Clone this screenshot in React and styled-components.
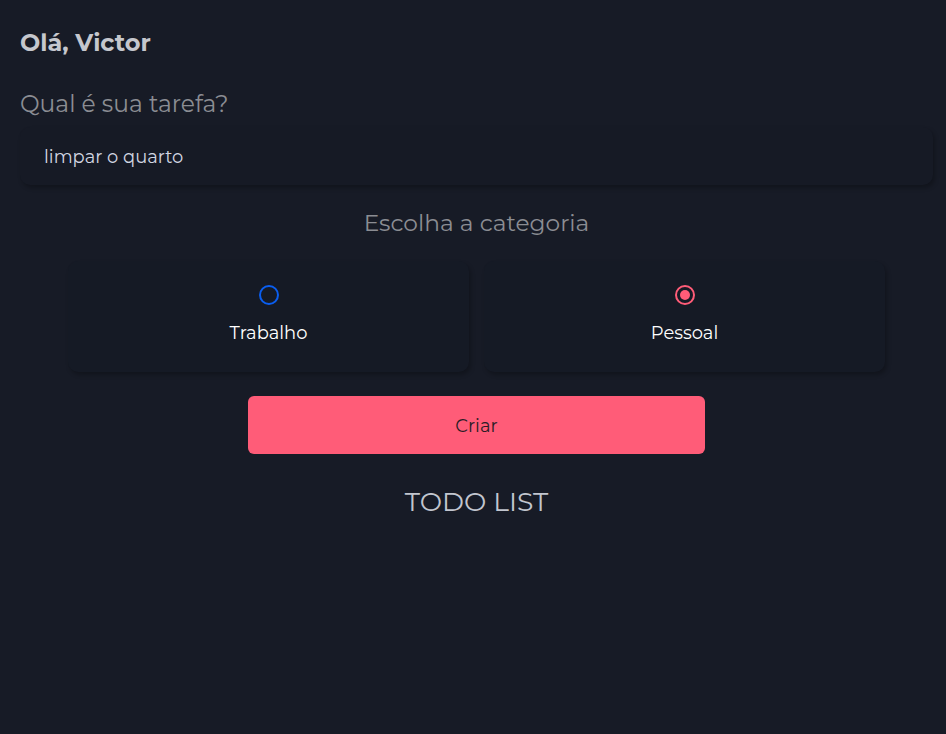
import React from 'react'
import styled, { createGlobalStyle } from 'styled-components';

const GlobalStyle = createGlobalStyle`
  body {
    margin: 0;
    background: #171b26;
    font-family: "Montserrat", "Lato", "Noto Sans", sans-serif;
  }
`;

const Page = styled.div`
  min-height: 734px;
  background: #171b26;
  padding: 0 13px 0 20px;
  box-sizing: border-box;
  display: flex;
  flex-direction: column;
`;

const Greeting = styled.h1`
  margin: 28px 0 0;
  font-size: 24px;
  line-height: 30px;
  font-weight: 700;
  color: #c5c7cd;
`;

const Question = styled.label`
  margin-top: 31px;
  font-size: 23.4px;
  line-height: 30px;
  color: #8b8d93;
`;

const Input = styled.input`
  margin-top: 8px;
  height: 58px;
  border: none;
  border-radius: 10px;
  background: #161a25;
  box-shadow: 2px 3px 4px rgba(0, 0, 0, 0.25);
  padding: 0 24px;
  font-family: inherit;
  font-size: 17.9px;
  color: #d2d6e2;
  outline: none;
`;

const Subtitle = styled.h2`
  margin: 23px 0 0;
  text-align: center;
  font-size: 23.3px;
  line-height: 30px;
  font-weight: 400;
  color: #8b8d93;
`;

const Cards = styled.div`
  margin: 23px auto 0;
  width: 817px;
  display: grid;
  grid-template-columns: 1fr 1fr;
  gap: 15px;
`;

const Card = styled.label`
  height: 111px;
  border-radius: 10px;
  background: #151a25;
  box-shadow: 2px 3px 4px rgba(0, 0, 0, 0.25);
  display: flex;
  flex-direction: column;
  align-items: center;
  padding-top: 24px;
  box-sizing: border-box;
  gap: 17px;
  color: #ffffff;
  font-size: 17.9px;
  line-height: 22px;
`;

const Radio = styled.span`
  width: 20px;
  height: 20px;
  box-sizing: border-box;
  border-radius: 50%;
  border: 2px solid ${props => props.color};
  display: flex;
  align-items: center;
  justify-content: center;
  &::after {
    content: '';
    width: 10px;
    height: 10px;
    border-radius: 50%;
    background: ${props => props.checked ? props.color : 'transparent'};
  }
`;

const Button = styled.button`
  margin: 24px auto 0;
  width: 457px;
  height: 58px;
  border: none;
  border-radius: 6px;
  background: #ff5c78;
  color: #2b1c26;
  font-family: inherit;
  font-size: 17.9px;
`;

const ListTitle = styled.h2`
  margin: 31px 0 0;
  text-align: center;
  font-size: 26.6px;
  line-height: 34px;
  font-weight: 400;
  color: #c2c6cf;
`;

const categories = [
  { label: 'Trabalho', color: '#0a5ef0', checked: false },
  { label: 'Pessoal', color: '#ff5c78', checked: true },
];

const App = () => {
  return (
    <Page>
      <GlobalStyle />
      <Greeting>Olá, Victor</Greeting>
      <Question>Qual é sua tarefa?</Question>
      <Input defaultValue="limpar o quarto" />
      <Subtitle>Escolha a categoria</Subtitle>
      <Cards>
        {categories.map(cat => (
          <Card key={cat.label}>
            <Radio color={cat.color} checked={cat.checked} />
            {cat.label}
          </Card>
        ))}
      </Cards>
      <Button>Criar</Button>
      <ListTitle>TODO LIST</ListTitle>
    </Page>
  )
}

export default App
